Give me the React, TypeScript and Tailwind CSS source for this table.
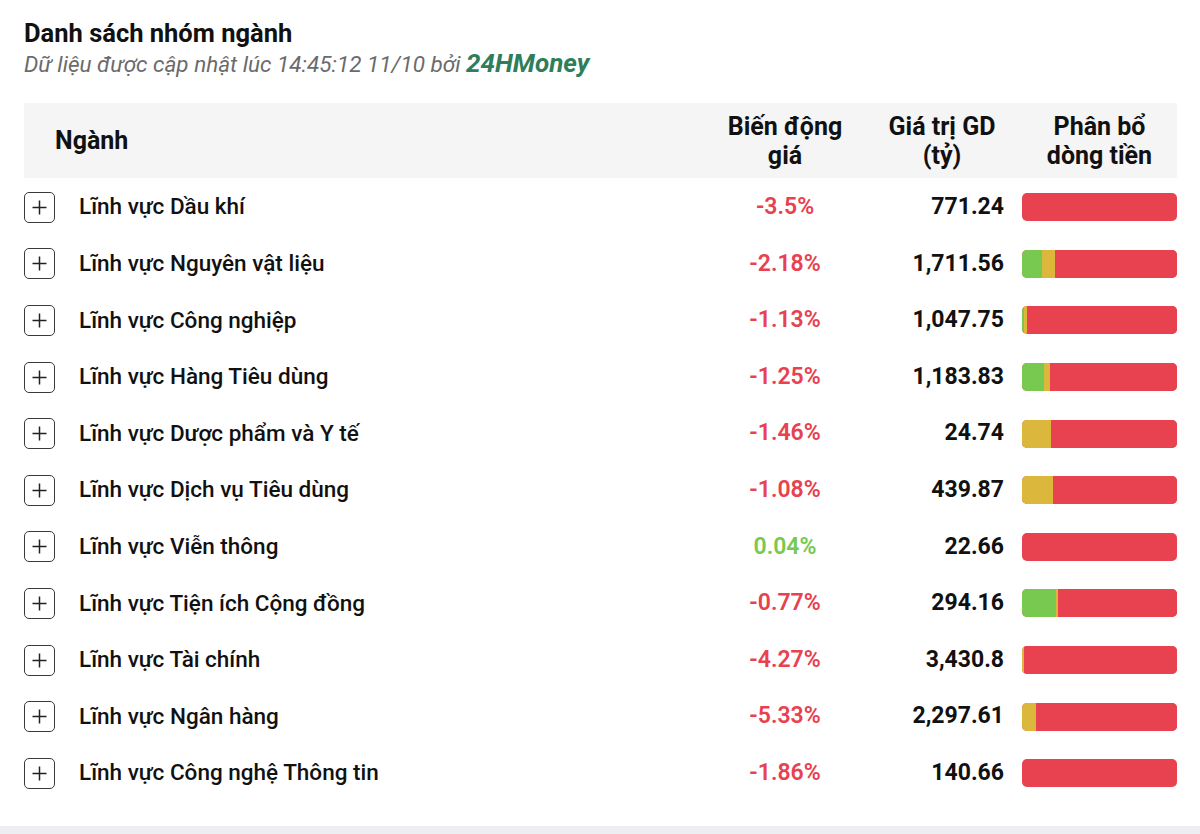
import React from "react";

type Row = { name: string; change: string; up: boolean; value: string; g: number; y: number };

const rows: Row[] = [
  { name: "Lĩnh vực Dầu khí", change: "-3.5%", up: false, value: "771.24", g: 0, y: 0 },
  { name: "Lĩnh vực Nguyên vật liệu", change: "-2.18%", up: false, value: "1,711.56", g: 13, y: 8 },
  { name: "Lĩnh vực Công nghiệp", change: "-1.13%", up: false, value: "1,047.75", g: 1, y: 2 },
  { name: "Lĩnh vực Hàng Tiêu dùng", change: "-1.25%", up: false, value: "1,183.83", g: 14, y: 4 },
  { name: "Lĩnh vực Dược phẩm và Y tế", change: "-1.46%", up: false, value: "24.74", g: 0, y: 19 },
  { name: "Lĩnh vực Dịch vụ Tiêu dùng", change: "-1.08%", up: false, value: "439.87", g: 0, y: 20 },
  { name: "Lĩnh vực Viễn thông", change: "0.04%", up: true, value: "22.66", g: 0, y: 0 },
  { name: "Lĩnh vực Tiện ích Cộng đồng", change: "-0.77%", up: false, value: "294.16", g: 22, y: 1 },
  { name: "Lĩnh vực Tài chính", change: "-4.27%", up: false, value: "3,430.8", g: 0, y: 1 },
  { name: "Lĩnh vực Ngân hàng", change: "-5.33%", up: false, value: "2,297.61", g: 0, y: 9 },
  { name: "Lĩnh vực Công nghệ Thông tin", change: "-1.86%", up: false, value: "140.66", g: 0, y: 0 },
];

function PlusBox() {
  return (
    <div className="w-[31px] h-[31px] rounded-[5px] border-[1.5px] border-[#3a3a3a] flex items-center justify-center shrink-0">
      <svg width="17" height="17" viewBox="0 0 17 17">
        <path d="M8.5 1.5v14M1.5 8.5h14" stroke="#222" strokeWidth="1.5" fill="none" />
      </svg>
    </div>
  );
}

function Bar({ g, y }: { g: number; y: number }) {
  return (
    <div className="w-[155px] h-[28px] rounded-[5px] overflow-hidden flex bg-[#e8414f]">
      {g > 0 && <div className="h-full bg-[#77c94f]" style={{ width: `${g}%` }} />}
      {y > 0 && <div className="h-full bg-[#dbb83b]" style={{ width: `${y}%` }} />}
      <div className="h-full flex-1 bg-[#e8414f]" />
    </div>
  );
}

export default function App() {
  return (
    <div
      className="w-[1200px] h-[834px] bg-white flex flex-col text-[#111]"
      style={{ fontFamily: "Roboto, 'Noto Sans', sans-serif" }}
    >
      <div className="flex-1 pl-[24px] pr-[23px] pt-[18px]">
        <h1 className="h-[30px] text-[25.5px] leading-[30px] font-bold text-[#111] whitespace-nowrap">Danh sách nhóm ngành</h1>
        <p className="h-[30px] text-[22.5px] leading-[30px] italic text-[#6b6b6b] mt-[1px] whitespace-nowrap">
          Dữ liệu được cập nhật lúc 14:45:12 11/10 bởi{" "}
          <span className="font-bold text-[26px] leading-none text-[#2e7d5b]">24HMoney</span>
        </p>
        <div className="mt-[24px]">
          <div className="h-[75px] bg-[#f5f5f5] flex items-center text-[25px] font-bold leading-[29px] whitespace-nowrap">
            <div className="flex-1 pl-[31px]">Ngành</div>
            <div className="w-[150px] text-center">
              Biến động
              <br />
              giá
            </div>
            <div className="w-[20px]" />
            <div className="w-[124px] flex justify-center">
              <div className="text-center">
                Giá trị GD
                <br />
                (tỷ)
              </div>
            </div>
            <div className="w-[18px]" />
            <div className="w-[155px] text-center">
              Phân bổ
              <br />
              dòng tiền
            </div>
          </div>
          <div className="pt-[1px]">
            {rows.map((r) => (
              <div key={r.name} className="h-[56.6px] flex items-center text-[22.5px]">
                <div className="flex-1 flex items-center">
                  <PlusBox />
                  <span className="ml-[24px] font-medium text-[#111]">{r.name}</span>
                </div>
                <div
                  className={`w-[150px] text-center font-semibold text-[23px] ${r.up ? "text-[#77c94f]" : "text-[#e8414f]"}`}
                >
                  {r.change}
                </div>
                <div className="w-[20px]" />
                <div className="w-[124px] text-right font-bold text-[23px] whitespace-nowrap">{r.value}</div>
                <div className="w-[18px]" />
                <Bar g={r.g} y={r.y} />
              </div>
            ))}
          </div>
        </div>
      </div>
      <div className="h-[8px] bg-[#eceef2]" />
    </div>
  );
}
